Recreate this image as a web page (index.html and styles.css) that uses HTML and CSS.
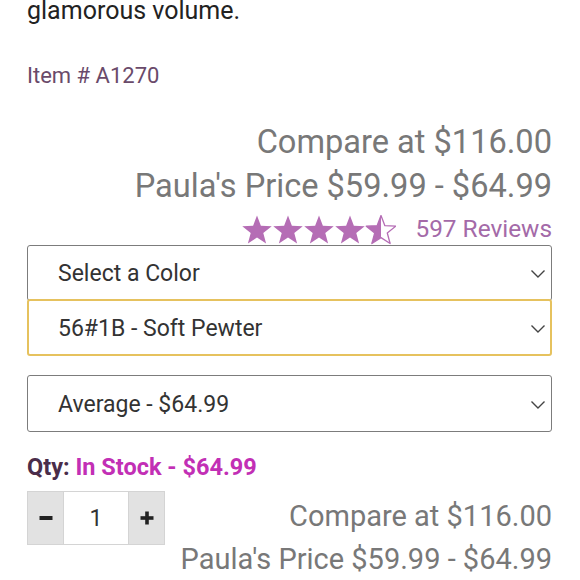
FILE: index.html
```html
<!DOCTYPE html>
<html>
<head>
<meta charset="utf-8">
<link rel="stylesheet" href="styles.css">
</head>
<body>
<div class="page">
  <p class="desc">glamorous volume.</p>
  <p class="item">Item # A1270</p>
  <div class="prices top">
    <div>Compare at $116.00</div>
    <div>Paula's Price $59.99 - $64.99</div>
  </div>
  <div class="rating">
    <svg class="stars" width="154" height="30" viewBox="0 0 154 30">
      <defs>
        <path id="st" d="M15 0.5L18.88 10.66L29.74 11.21L21.28 18.04L24.11 28.54L15 22.6L5.89 28.54L8.72 18.04L0.26 11.21L11.12 10.66Z"/>
        <clipPath id="half"><rect x="0" y="0" width="15" height="30"/></clipPath>
      </defs>
      <use href="#st" x="0" fill="#b56db5"/>
      <use href="#st" x="31" fill="#b56db5"/>
      <use href="#st" x="62" fill="#b56db5"/>
      <use href="#st" x="93" fill="#b56db5"/>
      <g transform="translate(124 0)">
        <use href="#st" fill="#b56db5" clip-path="url(#half)"/>
        <use href="#st" fill="none" stroke="#b56db5" stroke-width="1.3" stroke-linejoin="round"/>
      </g>
    </svg>
    <span class="reviews">597 Reviews</span>
  </div>
  <div class="select first"><span>Select a Color</span><svg class="chev" width="16" height="10" viewBox="0 0 16 10"><polyline points="1.5,1.5 8,8 14.5,1.5" fill="none" stroke="#444" stroke-width="1.4"/></svg></div>
  <div class="select active"><span>56#1B - Soft Pewter</span><svg class="chev" width="16" height="10" viewBox="0 0 16 10"><polyline points="1.5,1.5 8,8 14.5,1.5" fill="none" stroke="#444" stroke-width="1.4"/></svg></div>
  <div class="select third"><span>Average - $64.99</span><svg class="chev" width="16" height="10" viewBox="0 0 16 10"><polyline points="1.5,1.5 8,8 14.5,1.5" fill="none" stroke="#444" stroke-width="1.4"/></svg></div>
  <div class="qty-line"><span class="qty-label">Qty:</span> <span class="stock">In Stock - $64.99</span></div>
  <div class="bottom">
    <div class="qty-box">
      <div class="btn"><svg width="16" height="16" viewBox="0 0 16 16"><rect x="1.5" y="6" width="13" height="4" fill="#222"/></svg></div>
      <div class="num">1</div>
      <div class="btn"><svg width="16" height="16" viewBox="0 0 16 16"><rect x="1.5" y="6.2" width="13" height="3.6" fill="#222"/><rect x="6.2" y="1.5" width="3.6" height="13" fill="#222"/></svg></div>
    </div>
    <div class="prices low">
      <div>Compare at $116.00</div>
      <div>Paula's Price $59.99 - $64.99</div>
    </div>
  </div>
</div>
</body>
</html>
```
FILE: styles.css
```css
html, body {
  margin: 0;
  padding: 0;
  background: #fff;
  overflow: hidden;
}
body {
  font-family: Roboto, "Liberation Sans", sans-serif;
}
.page {
  padding: 0 28px 0 27px;
}
.desc {
  margin: -4px 0 0 0;
  font-size: 25px;
  line-height: 30px;
  color: #222;
}
.item {
  margin: 37px 0 0 0;
  font-size: 22px;
  line-height: 26px;
  color: #6a4a6a;
}
.prices {
  text-align: right;
  color: #787878;
}
.prices.top {
  margin-top: 31px;
  font-size: 32.6px;
  line-height: 44px;
}
.rating {
  margin-top: 5px;
  height: 32px;
  display: flex;
  justify-content: flex-end;
  align-items: center;
  gap: 19px;
}
.stars {
  display: block;
  margin-top: 2px;
}
.reviews {
  font-size: 24.4px;
  line-height: 32px;
  color: #a46aa8;
}
.select {
  box-sizing: border-box;
  display: flex;
  align-items: center;
  justify-content: space-between;
  padding: 2px 5px 0 30px;
  border: 1px solid #7c7c7c;
  border-radius: 3px;
  font-size: 23px;
  line-height: 26px;
  color: #333;
  background: #fff;
}
.select.first {
  height: 56px;
}
.select.active {
  height: 57px;
  margin-top: -2px;
  padding-left: 29px;
  padding-right: 4px;
  position: relative;
  border: 2px solid #e6c25e;
}
.select.third {
  height: 57px;
  margin-top: 19px;
}
.chev {
  display: block;
}
.qty-line {
  margin-top: 22px;
  font-size: 23.5px;
  line-height: 26px;
  font-weight: bold;
}
.qty-label {
  color: #4a2d4a;
}
.stock {
  color: #c22fb5;
}
.bottom {
  margin-top: 11px;
  display: flex;
  justify-content: space-between;
  align-items: flex-start;
}
.qty-box {
  display: flex;
  height: 54px;
  box-sizing: border-box;
  border: 1px solid #d4d4d4;
}
.btn {
  width: 35px;
  background: #e2e2e2;
  display: flex;
  align-items: center;
  justify-content: center;
}
.num {
  width: 64px;
  background: #fff;
  border-left: 1px solid #d4d4d4;
  border-right: 1px solid #d4d4d4;
  display: flex;
  align-items: center;
  justify-content: center;
  font-size: 23px;
  color: #333;
}
.prices.low {
  margin-top: 4px;
  font-size: 29px;
  line-height: 43px;
}
```
